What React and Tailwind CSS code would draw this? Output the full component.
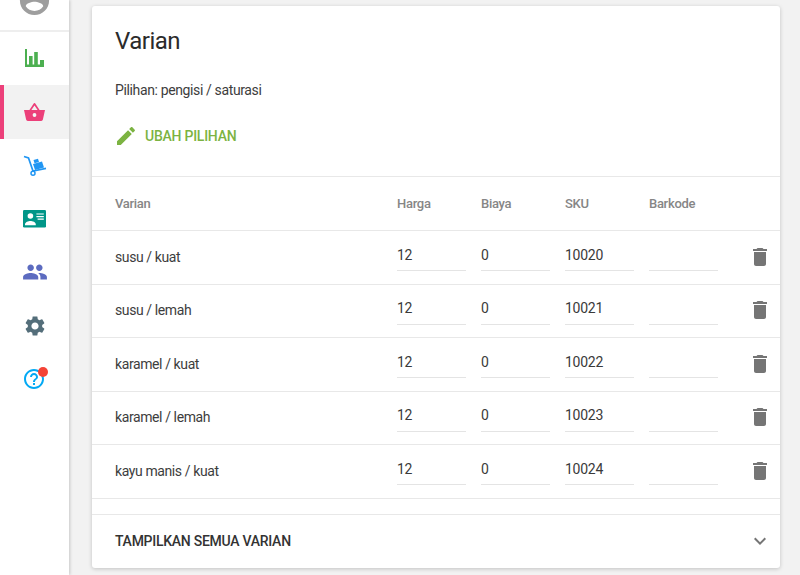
import React from 'react';

const rows = [
  { name: 'susu / kuat', sku: '10020' },
  { name: 'susu / lemah', sku: '10021' },
  { name: 'karamel / kuat', sku: '10022' },
  { name: 'karamel / lemah', sku: '10023' },
  { name: 'kayu manis / kuat', sku: '10024' },
];

function Icon({ d, className }) {
  return (
    <svg viewBox="0 0 24 24" className={className} fill="currentColor">
      <path d={d} />
    </svg>
  );
}

const paths = {
  account: 'M12 2C6.48 2 2 6.48 2 12s4.48 10 10 10 10-4.48 10-10S17.52 2 12 2zm0 3c1.66 0 3 1.34 3 3s-1.34 3-3 3-3-1.34-3-3 1.34-3 3-3zm0 14.2c-2.5 0-4.71-1.28-6-3.22.03-1.99 4-3.08 6-3.08 1.99 0 5.97 1.09 6 3.08-1.29 1.94-3.5 3.22-6 3.22z',
  edit: 'M3 17.25V21h3.75L17.81 9.94l-3.75-3.75L3 17.25zM20.71 7.04c.39-.39.39-1.02 0-1.41l-2.34-2.34c-.39-.39-1.02-.39-1.41 0l-1.83 1.83 3.75 3.75 1.83-1.83z',
  trash: 'M6 19c0 1.1.9 2 2 2h8c1.1 0 2-.9 2-2V7H6v12zM19 4h-3.5l-1-1h-5l-1 1H5v2h14V4z',
  chevron: 'M16.59 8.59L12 13.17 7.41 8.59 6 10l6 6 6-6z',
  people: 'M16 11c1.66 0 2.99-1.34 2.99-3S17.66 5 16 5c-1.66 0-3 1.34-3 3s1.34 3 3 3zm-8 0c1.66 0 2.99-1.34 2.99-3S9.66 5 8 5C6.34 5 5 6.34 5 8s1.34 3 3 3zm0 2c-2.33 0-7 1.17-7 3.5V19h14v-2.5c0-2.33-4.67-3.5-7-3.5zm8 0c-.29 0-.62.02-.97.05 1.16.84 1.97 1.97 1.97 3.45V19h6v-2.5c0-2.33-4.67-3.5-7-3.5z',
  settings: 'M19.14 12.94c.04-.3.06-.61.06-.94 0-.32-.02-.64-.07-.94l2.03-1.58c.18-.14.23-.41.12-.61l-1.92-3.32c-.12-.22-.37-.29-.59-.22l-2.39.96c-.5-.38-1.03-.7-1.62-.94l-.36-2.54c-.04-.24-.24-.41-.48-.41h-3.84c-.24 0-.43.17-.47.41l-.36 2.54c-.59.24-1.13.57-1.62.94l-2.39-.96c-.22-.08-.47 0-.59.22L2.74 8.87c-.12.21-.08.47.12.61l2.03 1.58c-.05.3-.09.63-.09.94s.02.64.07.94l-2.03 1.58c-.18.14-.23.41-.12.61l1.92 3.32c.12.22.37.29.59.22l2.39-.96c.5.38 1.03.7 1.62.94l.36 2.54c.05.24.24.41.48.41h3.84c.24 0 .44-.17.47-.41l.36-2.54c.59-.24 1.13-.56 1.62-.94l2.39.96c.22.08.47 0 .59-.22l1.92-3.32c.12-.22.07-.47-.12-.61l-2.01-1.58zM12 15.6c-1.98 0-3.6-1.62-3.6-3.6s1.62-3.6 3.6-3.6 3.6 1.62 3.6 3.6-1.62 3.6-3.6 3.6z',
  help: 'M11 18h2v-2h-2v2zm1-16C6.48 2 2 6.48 2 12s4.48 10 10 10 10-4.48 10-10S17.52 2 12 2zm0 18c-4.41 0-8-3.59-8-8s3.59-8 8-8 8 3.59 8 8-3.59 8-8 8zm0-14c-2.21 0-4 1.79-4 4h2c0-1.1.9-2 2-2s2 .9 2 2c0 2-3 1.75-3 5h2c0-2.25 3-2.5 3-5 0-2.21-1.79-4-4-4z',
};

function ChartIcon() {
  return (
    <svg viewBox="0 0 19 18" className="w-[19px] h-[18px] text-[#4caf50]" fill="currentColor">
      <path d="M0 0h2v15.5h17V18H0z" />
      <path d="M4 7h3.6v9H4zM9.2 3h3.6v13H9.2zM15 11h4v5h-4z" />
    </svg>
  );
}

function BasketIcon() {
  return (
    <svg viewBox="0 0 21 18" className="w-[21px] h-[18px] text-[#ec407a]" fill="currentColor">
      <path d="M9.7.5a1 1 0 0 1 1.6 0L15.6 7H21l-2.1 9.6a1.8 1.8 0 0 1-1.8 1.4H3.9a1.8 1.8 0 0 1-1.8-1.4L0 7h5.4zM7.4 7h6.2l-3.1-4.4z" />
      <circle cx="10.5" cy="12" r="1.9" fill="#f5f5f5" />
    </svg>
  );
}

function TrolleyIcon() {
  return (
    <svg viewBox="0 0 24 21" className="w-[24px] h-[21px] text-[#2196f3]" fill="currentColor">
      <path d="M1 1.5 5.5 3 10 16 23 13.4" fill="none" stroke="currentColor" strokeWidth="1.7" />
      <path d="M10 9l9-2.5 2 6-9 2.5z" />
      <path d="M10.5 5l4.5-1.2 1 3.2-4.5 1.2z" />
      <circle cx="10" cy="18.2" r="2" fill="none" stroke="currentColor" strokeWidth="1.5" />
    </svg>
  );
}

function CardIcon() {
  return (
    <svg viewBox="0 0 23 18" className="w-[23px] h-[18px] text-[#009688]" fill="currentColor">
      <rect width="23" height="17.5" rx="1.2" />
      <circle cx="7.4" cy="6" r="2.8" fill="#fff" />
      <path d="M2 14.4c0-2.2 3.4-3.4 5.4-3.4s5.4 1.2 5.4 3.4v.8H2z" fill="#fff" />
      <path d="M13.4 3.4h7.4v1.2h-7.4zM13.4 6h7.4v1.2h-7.4zM14.6 8.6h6.2v1.2h-6.2z" fill="#fff" />
    </svg>
  );
}

function NavItem({ children, active }) {
  return (
    <div className={`h-[53.5px] flex items-center justify-center relative ${active ? 'bg-[#f2f2f2]' : ''}`}>
      {active && <div className="absolute left-0 top-0 bottom-0 w-[4px] bg-[#ec407a]" />}
      {children}
    </div>
  );
}

function Field({ value }) {
  return (
    <div className="w-[69px] h-[31px] border-b border-[#e4e4e4] flex items-center text-[14px] tracking-[-0.25px] text-[#3a3a3a] -mt-[3px]">
      {value}
    </div>
  );
}

export default function App() {
  return (
    <div className="w-[800px] h-[575px] overflow-hidden flex bg-[#f2f2f2] font-['Roboto',sans-serif]">
      <aside className="w-[69px] h-full bg-white shadow-[1px_0_3px_rgba(0,0,0,0.18)] shrink-0 overflow-hidden">
        <div className="h-[31.5px] border-b-2 border-[#eeeeee] flex justify-center overflow-hidden">
          <Icon d={paths.account} className="w-[35px] h-[35px] shrink-0 -mt-[17px] text-[#9e9e9e]" />
        </div>
        <NavItem><ChartIcon /></NavItem>
        <NavItem active><BasketIcon /></NavItem>
        <NavItem><TrolleyIcon /></NavItem>
        <NavItem><CardIcon /></NavItem>
        <NavItem><Icon d={paths.people} className="w-[26px] h-[26px] text-[#5c6bc0]" /></NavItem>
        <NavItem><Icon d={paths.settings} className="w-[24px] h-[24px] text-[#546e7a]" /></NavItem>
        <NavItem>
          <div className="relative">
            <Icon d={paths.help} className="w-[24px] h-[24px] text-[#03a9f4] -ml-[1px]" />
            <span className="absolute top-0 -right-[2px] w-[10px] h-[10px] rounded-full bg-[#f44336]" />
          </div>
        </NavItem>
      </aside>

      <main className="flex-1 pt-[6px] pl-[23px] pr-[20px]">
        <div className="bg-white rounded-[3px] h-[562px] shadow-[0_1px_4px_rgba(0,0,0,0.2)] flex flex-col">
          <div className="h-[171px] pl-[23px] border-b border-[#e8e8e8] shrink-0">
            <h1 className="pt-[20px] text-[24px] tracking-[-0.5px] leading-[30px] font-normal text-[#2b2b2b]">Varian</h1>
            <p className="mt-[24px] text-[14px] tracking-[-0.37px] leading-[20px] text-[#3d3d3d]">Pilihan: pengisi / saturasi</p>
            <div className="mt-[24px] flex items-center gap-[7px] -ml-[1px]">
              <Icon d={paths.edit} className="w-[24px] h-[24px] text-[#7cb342]" />
              <span className="text-[14px] tracking-[-0.25px] font-medium text-[#7cb342]">UBAH PILIHAN</span>
            </div>
          </div>

          <div className="h-[54px] shrink-0 pl-[23px] grid grid-cols-[282px_84px_84px_84px_84px_1fr] items-center text-[13px] tracking-[-0.3px] font-medium text-[#868686] border-b border-[#e8e8e8]">
            <span>Varian</span>
            <span>Harga</span>
            <span>Biaya</span>
            <span>SKU</span>
            <span>Barkode</span>
          </div>

          {rows.map((r) => (
            <div key={r.sku} className="h-[53.5px] shrink-0 pl-[23px] grid grid-cols-[282px_84px_84px_84px_84px_1fr] items-center border-b border-[#e8e8e8]">
              <span className="text-[14px] tracking-[-0.4px] text-[#3d3d3d]">{r.name}</span>
              <Field value="12" />
              <Field value="0" />
              <Field value={r.sku} />
              <Field value="" />
              <Icon d={paths.trash} className="w-[24px] h-[24px] text-[#757575] ml-[15px] -mt-[1px]" />
            </div>
          ))}

          <div className="h-[16px] shrink-0 border-b border-[#e8e8e8]" />

          <div className="flex-1 pl-[23px] pr-[8px] flex items-center justify-between">
            <span className="pt-[1px] text-[14px] tracking-[-0.27px] font-medium text-[#333333]">TAMPILKAN SEMUA VARIAN</span>
            <Icon d={paths.chevron} className="w-[24px] h-[24px] text-[#757575]" />
          </div>
        </div>
      </main>
    </div>
  );
}
